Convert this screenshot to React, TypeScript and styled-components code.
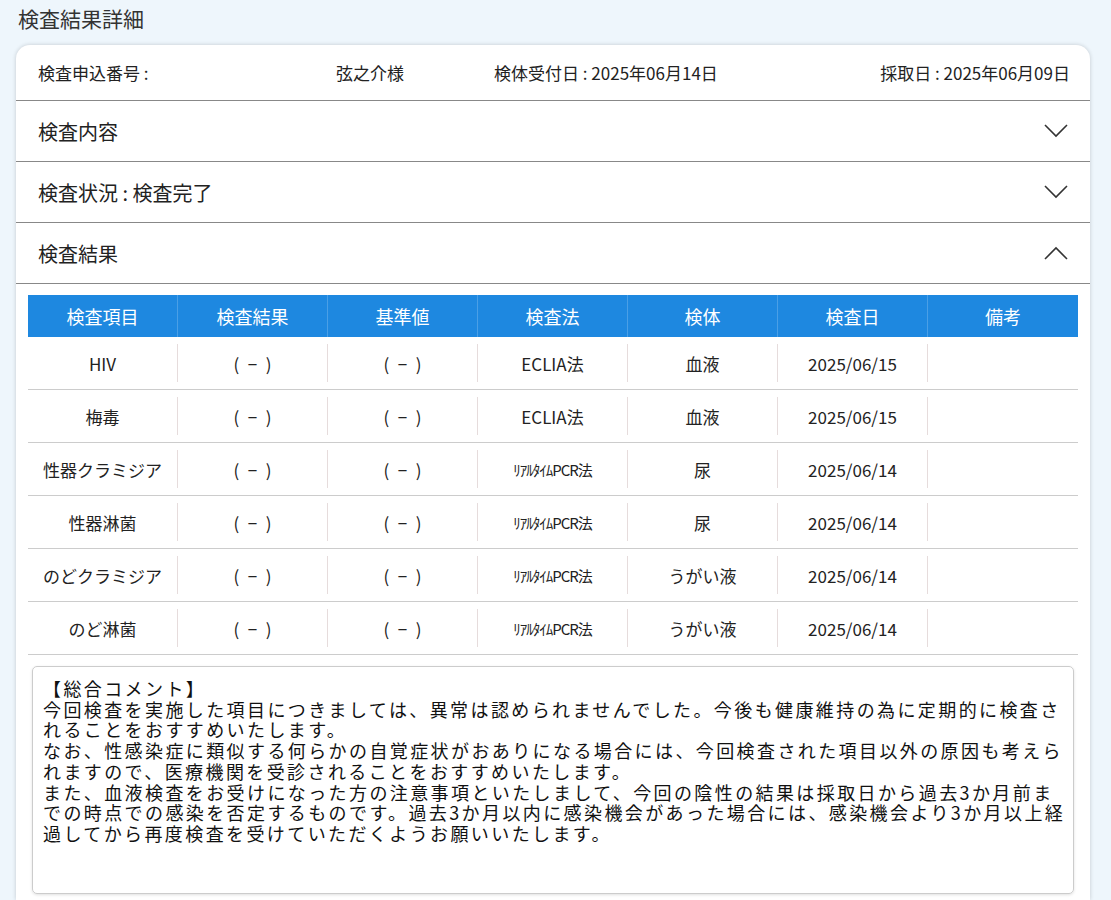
import React from 'react'
import styled, { createGlobalStyle } from 'styled-components'

const Global = createGlobalStyle`
  body {
    margin: 0;
    background: #eef6fc;
    font-family: "Noto Sans CJK JP", "Noto Sans", sans-serif;
    color: #222;
  }
`

const Page = styled.div`
  padding: 0 21px 0 16px;
`

const Title = styled.h1`
  margin: 0;
  padding: 3px 0 0 2px;
  height: 42px;
  font-size: 21px;
  font-weight: 400;
  color: #333;
`

const Card = styled.div`
  background: #fff;
  border-radius: 14px 14px 0 0;
  box-shadow: 0 0 4px rgba(0, 0, 0, 0.18);
`

const InfoRow = styled.div`
  display: flex;
  align-items: center;
  height: 55px;
  padding: 0 20px 0 22px;
  font-size: 17px;
  border-bottom: 1px solid #888;
`

const InfoCell = styled.div<{ $w?: number }>`
  flex: ${({ $w }) => ($w ? `0 0 ${$w}px` : '1')};
  text-align: ${({ $w }) => ($w ? 'left' : 'right')};
`

const Section = styled.div`
  display: flex;
  align-items: center;
  justify-content: space-between;
  height: 60px;
  padding: 0 22px;
  font-size: 20px;
  border-bottom: 1px solid #888;
`

const Chevron = ({ up }: { up?: boolean }) => (
  <svg width="24" height="14" viewBox="0 0 24 14" fill="none" stroke="#333" strokeWidth="1.6">
    {up ? <path d="M1 13 L12 2 L23 13" /> : <path d="M1 1 L12 12 L23 1" />}
  </svg>
)

const Body = styled.div`
  padding: 11px 12px 6px 12px;
`

const Table = styled.div`
  display: grid;
  grid-template-columns: repeat(7, 1fr);
`

const Head = styled.div`
  background: #1e88e0;
  color: #fff;
  height: 42px;
  display: flex;
  align-items: center;
  justify-content: center;
  font-size: 18px;
  border-right: 1px solid #4a9fe6;
  &:nth-child(7n) { border-right: none; }
`

const Cell = styled.div`
  height: 53px;
  padding: 7px 0;
  box-sizing: border-box;
  border-bottom: 1px solid #ccc;
  &:nth-child(7n) > div { border-right: none; }
`

const CellInner = styled.div<{ $small?: boolean }>`
  height: 100%;
  display: flex;
  align-items: center;
  justify-content: center;
  border-right: 1px solid #e6dcdc;
  font-size: ${({ $small }) => ($small ? '15px' : '17px')};
  letter-spacing: ${({ $small }) => ($small ? '-1px' : '0')};
`

const Comment = styled.div`
  margin: 11px 4px 0 4px;
  height: 228px;
  box-sizing: border-box;
  padding: 11px 10px;
  border: 1px solid #ccc;
  border-radius: 5px;
  box-shadow: 0 1px 3px rgba(0, 0, 0, 0.12);
  font-size: 18px;
  letter-spacing: 2.4px;
  line-height: 20.7px;
  color: #111;
  white-space: nowrap;
`

const heads = ['検査項目', '検査結果', '基準値', '検査法', '検体', '検査日', '備考']
const rows = [
  ['HIV', 'ECLIA法', '血液', '2025/06/15'],
  ['梅毒', 'ECLIA法', '血液', '2025/06/15'],
  ['性器クラミジア', 'ﾘｱﾙﾀｲﾑPCR法', '尿', '2025/06/14'],
  ['性器淋菌', 'ﾘｱﾙﾀｲﾑPCR法', '尿', '2025/06/14'],
  ['のどクラミジア', 'ﾘｱﾙﾀｲﾑPCR法', 'うがい液', '2025/06/14'],
  ['のど淋菌', 'ﾘｱﾙﾀｲﾑPCR法', 'うがい液', '2025/06/14'],
]

const minus = '(\u2002−\u2002)'

export default function App() {
  return (
    <Page>
      <Global />
      <Title>検査結果詳細</Title>
      <Card>
        <InfoRow>
          <InfoCell $w={298}>検査申込番号 :</InfoCell>
          <InfoCell $w={158}>弦之介様</InfoCell>
          <InfoCell $w={300}>検体受付日 : 2025年06月14日</InfoCell>
          <InfoCell>採取日 : 2025年06月09日</InfoCell>
        </InfoRow>
        <Section>検査内容<Chevron /></Section>
        <Section>検査状況 : 検査完了<Chevron /></Section>
        <Section>検査結果<Chevron up /></Section>
        <Body>
          <Table>
            {heads.map(h => <Head key={h}>{h}</Head>)}
            {rows.map(r => {
              const vals = [r[0], minus, minus, r[1], r[2], r[3], '']
              return vals.map((v, i) => (
                <Cell key={r[0] + i}>
                  <CellInner $small={v.startsWith('ﾘ')}>{v}</CellInner>
                </Cell>
              ))
            })}
          </Table>
          <Comment>
            【総合コメント】<br />
            今回検査を実施した項目につきましては、異常は認められませんでした。今後も健康維持の為に定期的に検査さ<br />
            れることをおすすめいたします。<br />
            なお、性感染症に類似する何らかの自覚症状がおありになる場合には、今回検査された項目以外の原因も考えら<br />
            れますので、医療機関を受診されることをおすすめいたします。<br />
            また、血液検査をお受けになった方の注意事項といたしまして、今回の陰性の結果は採取日から過去3か月前ま<br />
            での時点での感染を否定するものです。過去3か月以内に感染機会があった場合には、感染機会より3か月以上経<br />
            過してから再度検査を受けていただくようお願いいたします。
          </Comment>
        </Body>
      </Card>
    </Page>
  )
}
